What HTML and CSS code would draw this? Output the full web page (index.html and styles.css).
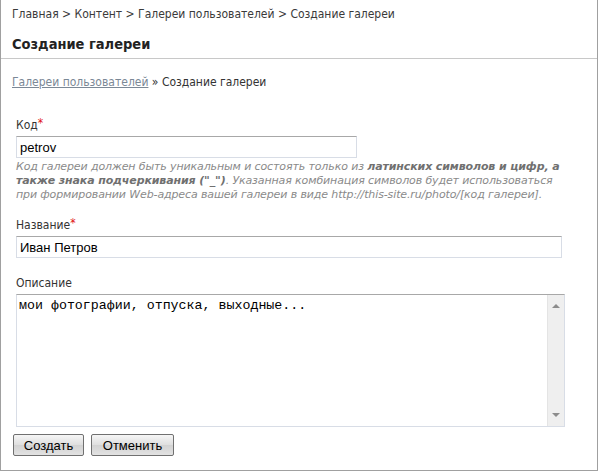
FILE: index.html
```
<!DOCTYPE html>
<html lang="ru">
<head>
<meta charset="utf-8">
<title>Создание галереи</title>
<link rel="stylesheet" href="styles.css">
</head>
<body>
<div class="frame">
  <div class="header">
    <div class="crumbs">Главная &gt; Контент &gt; Галереи пользователей &gt; Создание галереи</div>
    <h1 class="title">Создание галереи</h1>
  </div>
  <div class="content">
    <div class="subcrumbs"><a href="#" class="link">Галереи пользователей</a> » Создание галереи</div>
    <form class="form">
      <div class="field field-code">
        <label class="label">Код<span class="req">*</span></label>
        <input class="input input-code" type="text" value="petrov">
        <div class="hint">Код галереи должен быть уникальным и состоять только из <b>латинских символов и цифр, а также знака подчеркивания ("_")</b>. Указанная комбинация символов будет использоваться при формировании Web-адреса вашей галереи в виде http://this-site.ru/photo/[код галереи].</div>
      </div>
      <div class="field field-name">
        <label class="label">Название<span class="req">*</span></label>
        <input class="input input-name" type="text" value="Иван Петров">
      </div>
      <div class="field field-desc">
        <label class="label">Описание</label>
        <div class="textbox">
          <div class="textarea">мои фотографии, отпуска, выходные...</div>
          <div class="scrollbar">
            <span class="arrow arrow-up"></span>
            <span class="arrow arrow-down"></span>
          </div>
        </div>
      </div>
      <div class="buttons">
        <button type="button" class="btn btn-create">Создать</button>
        <button type="button" class="btn btn-cancel">Отменить</button>
      </div>
    </form>
  </div>
</div>
</body>
</html>
```
FILE: styles.css
```
* { box-sizing: border-box; }
html, body { margin: 0; padding: 0; background: #fff; }
body {
  font-family: "DejaVu Sans Condensed", "DejaVu Sans", Verdana, sans-serif;
  font-stretch: condensed;
  font-size: 12px;
  color: #333;
}
.frame {
  width: 598px;
  height: 471px;
  border-left: 1px solid #a0a0a0;
  border-right: 1px solid #a0a0a0;
  border-bottom: 1px solid #a0a0a0;
  overflow: hidden;
}
.header {
  border-bottom: 1px solid #c8c8c8;
  padding: 6px 11px 4px;
}
.crumbs {
  line-height: 16px;
  color: #3a3a3a;
}
.title {
  margin: 12px 0 0;
  font-size: 14.5px;
  line-height: 20px;
  font-weight: bold;
  color: #222;
}
.content {
  padding: 15px 0 0 11px;
}
.subcrumbs {
  line-height: 16px;
  color: #333;
}
.link {
  color: #7b8896;
  text-decoration: underline;
}
.form {
  padding-left: 4px;
  margin-top: 27px;
}
.field { display: flex; flex-direction: column; align-items: flex-start; }
.label {
  line-height: 16px;
  margin-bottom: 3px;
  color: #333;
}
.req {
  color: #e01010;
  font-size: 12px;
  position: relative;
  top: -2px;
}
.input {
  height: 22px;
  border: 1px solid #d8dde6;
  border-top-color: #a8a8a8;
  font-family: "Liberation Sans", Arial, sans-serif;
  font-stretch: normal;
  font-size: 13px;
  color: #000;
  padding: 0 3px;
  margin: 0;
  background: #fff;
}
.input-code { width: 341px; }
.input-name { width: 546px; }
.hint {
  width: 556px;
  margin-top: 2px;
  font-family: "DejaVu Sans", Verdana, sans-serif;
  font-stretch: normal;
  font-size: 11px;
  letter-spacing: -0.12px;
  line-height: 14px;
  font-style: italic;
  color: #8a8a8a;
}
.hint b { color: #707070; }
.field-name { margin-top: 15px; }
.field-desc { margin-top: 17px; }
.textbox {
  width: 549px;
  height: 133px;
  display: flex;
  border: 1px solid #d8dde6;
  border-top-color: #a8a8a8;
}
.textarea {
  flex: 1;
  padding: 3px 2px;
  font-family: "Liberation Mono", "Courier New", monospace;
  font-stretch: normal;
  font-size: 13.3px;
  line-height: 15px;
  color: #000;
}
.scrollbar {
  width: 17px;
  background: #efefef;
  border-left: 1px solid #e4e4e4;
  display: flex;
  flex-direction: column;
  justify-content: space-between;
  align-items: center;
  padding: 9px 0 9px;
}
.arrow {
  width: 0;
  height: 0;
  border-left: 4px solid transparent;
  border-right: 4px solid transparent;
}
.arrow-up { border-bottom: 4px solid #8c8c8c; }
.arrow-down { border-top: 4px solid #8c8c8c; }
.buttons {
  display: flex;
  gap: 7px;
  margin-top: 7px;
  margin-left: -3px;
}
.btn {
  height: 22px;
  padding: 0;
  border: 1px solid #707070;
  border-radius: 2px;
  background: linear-gradient(#f6f6f6, #dedede 50%, #d2d2d2 51%, #e2e2e2);
  font-family: "Liberation Sans", Arial, sans-serif;
  font-stretch: normal;
  font-size: 13px;
  color: #000;
}
.btn-create { width: 71px; }
.btn-cancel { width: 83px; }
```
